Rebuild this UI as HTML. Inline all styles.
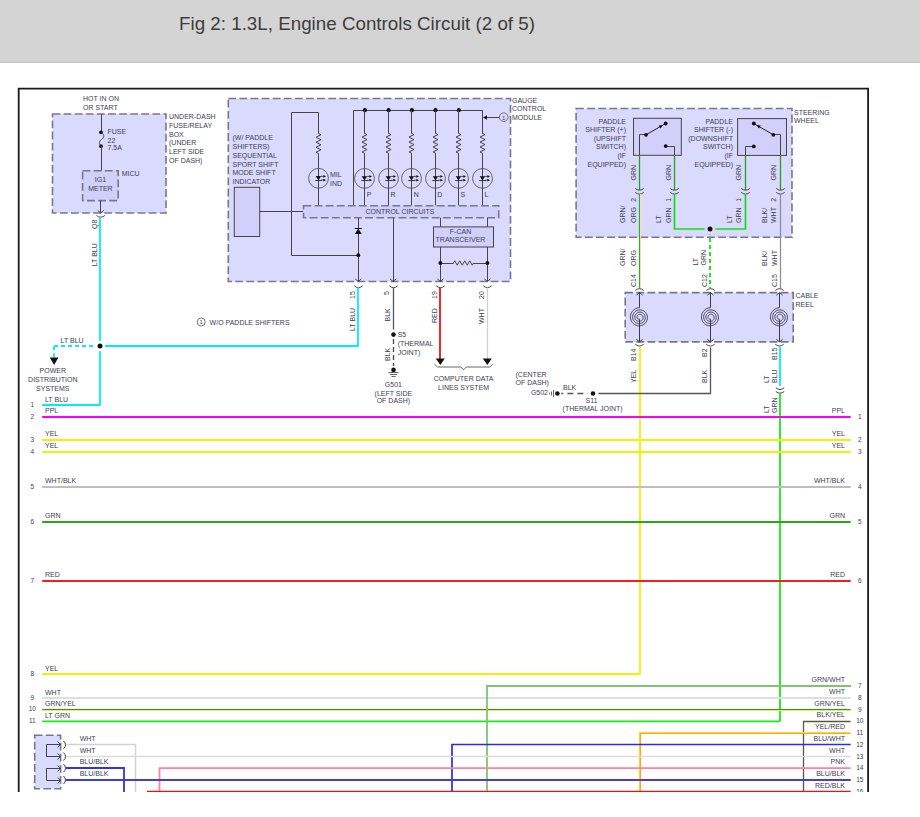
<!DOCTYPE html>
<html><head><meta charset="utf-8"><style>
html,body{margin:0;padding:0;background:#fff;width:920px;height:817px;overflow:hidden}
svg{display:block;font-family:"Liberation Sans",sans-serif}
</style></head><body>
<svg width="920" height="817" viewBox="0 0 920 817">
<rect x="0" y="0" width="920" height="63" fill="#d4d4d4"/>
<rect x="0" y="61" width="920" height="1" fill="#d0d0d0"/>
<rect x="0" y="62" width="920" height="1" fill="#c9c9c9"/>
<text x="179" y="30" font-size="19" fill="#3d3d3d" textLength="356" lengthAdjust="spacingAndGlyphs">Fig 2: 1.3L, Engine Controls Circuit (2 of 5)</text>
<path d="M18.7,792 V88.6 H868.1 V792" fill="none" stroke="#1a1a1a" stroke-width="1.8" />
<rect x="52.5" y="114" width="113.5" height="99" fill="#dadafe" stroke="#77778c" stroke-width="1.6" stroke-dasharray="7.8,3.3"/>
<text x="83" y="101.0" font-size="7" fill="#404052" text-anchor="start" >HOT IN ON</text>
<text x="83" y="109.5" font-size="7" fill="#404052" text-anchor="start" >OR START</text>
<text x="169" y="119.0" font-size="7" fill="#404052" text-anchor="start" >UNDER-DASH</text>
<text x="169" y="127.75" font-size="7" fill="#404052" text-anchor="start" >FUSE/RELAY</text>
<text x="169" y="136.5" font-size="7" fill="#404052" text-anchor="start" >BOX</text>
<text x="169" y="145.25" font-size="7" fill="#404052" text-anchor="start" >(UNDER</text>
<text x="169" y="154.0" font-size="7" fill="#404052" text-anchor="start" >LEFT SIDE</text>
<text x="169" y="162.75" font-size="7" fill="#404052" text-anchor="start" >OF DASH)</text>
<line x1="101.5" y1="114" x2="101.5" y2="132.3" stroke="#454545" stroke-width="1" />
<circle cx="101" cy="132.3" r="1.9" fill="#111"/>
<circle cx="101" cy="146.2" r="1.9" fill="#111"/>
<path d="M101.5,132.5 C105,135 104,138 101.5,139.5 C99,141 98.5,144 101.5,146.2" fill="none" stroke="#454545" stroke-width="1" />
<line x1="101.5" y1="146.2" x2="101.5" y2="170.7" stroke="#454545" stroke-width="1" />
<text x="107.5" y="133.9" font-size="7" fill="#404052" text-anchor="start" >FUSE</text>
<text x="107.5" y="142.8" font-size="7" fill="#404052" text-anchor="start" >22</text>
<text x="107.5" y="150.2" font-size="7" fill="#404052" text-anchor="start" >7.5A</text>
<rect x="82.6" y="170.7" width="35.60000000000001" height="29.900000000000006" fill="#d0d0fa" stroke="#77778c" stroke-width="1.6" stroke-dasharray="7.8,3.3"/>
<text x="100.4" y="182" font-size="7" fill="#404052" text-anchor="middle" >IG1</text>
<text x="100.4" y="191" font-size="7" fill="#404052" text-anchor="middle" >METER</text>
<text x="121.7" y="176" font-size="7" fill="#404052" text-anchor="start" >MICU</text>
<line x1="100.5" y1="200.6" x2="100.5" y2="213" stroke="#454545" stroke-width="1" />
<polyline points="97.60000000000001,210.365 100.7,213 103.8,210.365" fill="none" stroke="#454545" stroke-width="1" />
<path d="M96.5,215.5 Q100.7,218.89999999999998 104.9,215.5" fill="none" stroke="#454545" stroke-width="1" />
<line x1="100" y1="218" x2="100" y2="404.8" stroke="#00eefc" stroke-width="1.8" />
<text x="97" y="229" font-size="7" fill="#404052" text-anchor="start" transform="rotate(-90 97 229)" >Q8</text>
<text x="97" y="266.3" font-size="7" fill="#404052" text-anchor="start" transform="rotate(-90 97 266.3)" >LT BLU</text>
<line x1="54.1" y1="346" x2="98" y2="346" stroke="#00eefc" stroke-width="1.8" stroke-dasharray="4,3"/>
<line x1="54" y1="346.3" x2="54" y2="357.4" stroke="#00eefc" stroke-width="1.8" stroke-dasharray="4,3"/>
<path d="M49.8,357.6 L58.4,357.6 L54.1,365 Z" fill="#111"/>
<text x="60.6" y="342.8" font-size="7" fill="#404052" text-anchor="start" >LT BLU</text>
<text x="52.8" y="373.0" font-size="7" fill="#404052" text-anchor="middle" >POWER</text>
<text x="52.8" y="381.75" font-size="7" fill="#404052" text-anchor="middle" >DISTRIBUTION</text>
<text x="52.8" y="390.5" font-size="7" fill="#404052" text-anchor="middle" >SYSTEMS</text>
<line x1="100.4" y1="346" x2="358.3" y2="346" stroke="#00eefc" stroke-width="1.8" />
<circle cx="100" cy="346" r="5.2" fill="#fff"/>
<circle cx="100" cy="346" r="2.5" fill="#111"/>
<circle cx="201.2" cy="322" r="4" fill="none" stroke="#555" stroke-width="0.8"/>
<text x="201.2" y="324.4" font-size="6" fill="#404052" text-anchor="middle" >1</text>
<text x="209.6" y="324.8" font-size="7" fill="#404052" text-anchor="start" >W/O PADDLE SHIFTERS</text>
<rect x="228.3" y="98.5" width="282.2" height="183.0" fill="#dadafe" stroke="#77778c" stroke-width="1.6" stroke-dasharray="7.8,3.3"/>
<text x="232.5" y="139.8" font-size="7" fill="#404052" text-anchor="start" >(W/ PADDLE</text>
<text x="232.5" y="148.7" font-size="7" fill="#404052" text-anchor="start" >SHIFTERS)</text>
<text x="232.5" y="157.6" font-size="7" fill="#404052" text-anchor="start" >SEQUENTIAL</text>
<text x="232.5" y="166.5" font-size="7" fill="#404052" text-anchor="start" >SPORT SHIFT</text>
<text x="232.5" y="175.4" font-size="7" fill="#404052" text-anchor="start" >MODE SHIFT</text>
<text x="232.5" y="184.3" font-size="7" fill="#404052" text-anchor="start" >INDICATOR</text>
<text x="512" y="102.7" font-size="7" fill="#404052" text-anchor="start" >GAUGE</text>
<text x="512" y="111.2" font-size="7" fill="#404052" text-anchor="start" >CONTROL</text>
<text x="512" y="119.7" font-size="7" fill="#404052" text-anchor="start" >MODULE</text>
<rect x="234.3" y="187.3" width="25.399999999999977" height="49.19999999999999" fill="#d0d0fa" stroke="#454545" stroke-width="1"/>
<line x1="259.7" y1="211.5" x2="303.5" y2="211.5" stroke="#454545" stroke-width="1" />
<polyline points="358.5,255.5 291.5,255.5 291.5,112.5 318.5,112.5 318.5,133.5" fill="none" stroke="#454545" stroke-width="1" />
<polyline points="318.5,133.5 321.0,134.75 316.0,137.25 321.0,139.75 316.0,142.25 321.0,144.75 316.0,147.25 321.0,149.75 316.0,152.25 318.5,153.5" fill="none" stroke="#454545" stroke-width="1" />
<line x1="318.5" y1="153.5" x2="318.5" y2="205.6" stroke="#454545" stroke-width="1" />
<circle cx="318.5" cy="178.3" r="9.9" fill="none" stroke="#454545" stroke-width="0.8"/>
<path d="M315.7,176.10000000000002 L321.1,176.10000000000002 L318.5,180.5 Z" fill="#111"/>
<line x1="315.3" y1="180.5" x2="321.7" y2="180.5" stroke="#222" stroke-width="0.9" />
<line x1="321.0" y1="176.3" x2="324.5" y2="176.3" stroke="#222" stroke-width="0.8" />
<line x1="321.0" y1="180.10000000000002" x2="324.5" y2="180.10000000000002" stroke="#222" stroke-width="0.8" />
<path d="M326.0,176.3 l-2.6,-1.4 v2.8 Z M326.0,180.10000000000002 l-2.6,-1.4 v2.8 Z" fill="#111"/>
<text x="330" y="176.7" font-size="7" fill="#404052" text-anchor="start" >MIL</text>
<text x="330" y="185.7" font-size="7" fill="#404052" text-anchor="start" >IND</text>
<polyline points="353.5,205.5 353.5,110.5 482.5,110.5 482.5,133.5" fill="none" stroke="#454545" stroke-width="1" />
<circle cx="364.9" cy="110.2" r="2.1" fill="#111"/>
<line x1="364.5" y1="110.2" x2="364.5" y2="133.4" stroke="#454545" stroke-width="1" />
<polyline points="364.5,133.4 367.0,134.64 362.0,137.11 367.0,139.59 362.0,142.06 367.0,144.54 362.0,147.01 367.0,149.49 362.0,151.96 364.5,153.2" fill="none" stroke="#454545" stroke-width="1" />
<line x1="364.5" y1="153.2" x2="364.5" y2="205.6" stroke="#454545" stroke-width="1" />
<circle cx="364.5" cy="178.4" r="9.9" fill="none" stroke="#454545" stroke-width="0.8"/>
<path d="M361.7,176.20000000000002 L367.1,176.20000000000002 L364.5,180.6 Z" fill="#111"/>
<line x1="361.3" y1="180.6" x2="367.7" y2="180.6" stroke="#222" stroke-width="0.9" />
<line x1="367.0" y1="176.4" x2="370.5" y2="176.4" stroke="#222" stroke-width="0.8" />
<line x1="367.0" y1="180.20000000000002" x2="370.5" y2="180.20000000000002" stroke="#222" stroke-width="0.8" />
<path d="M372.0,176.4 l-2.6,-1.4 v2.8 Z M372.0,180.20000000000002 l-2.6,-1.4 v2.8 Z" fill="#111"/>
<text x="366.7" y="196.5" font-size="7" fill="#404052" text-anchor="start" >P</text>
<circle cx="388.6" cy="110.2" r="2.1" fill="#111"/>
<line x1="388.5" y1="110.2" x2="388.5" y2="133.4" stroke="#454545" stroke-width="1" />
<polyline points="388.5,133.4 391.0,134.64 386.0,137.11 391.0,139.59 386.0,142.06 391.0,144.54 386.0,147.01 391.0,149.49 386.0,151.96 388.5,153.2" fill="none" stroke="#454545" stroke-width="1" />
<line x1="388.5" y1="153.2" x2="388.5" y2="205.6" stroke="#454545" stroke-width="1" />
<circle cx="388.5" cy="178.4" r="9.9" fill="none" stroke="#454545" stroke-width="0.8"/>
<path d="M385.7,176.20000000000002 L391.1,176.20000000000002 L388.5,180.6 Z" fill="#111"/>
<line x1="385.3" y1="180.6" x2="391.7" y2="180.6" stroke="#222" stroke-width="0.9" />
<line x1="391.0" y1="176.4" x2="394.5" y2="176.4" stroke="#222" stroke-width="0.8" />
<line x1="391.0" y1="180.20000000000002" x2="394.5" y2="180.20000000000002" stroke="#222" stroke-width="0.8" />
<path d="M396.0,176.4 l-2.6,-1.4 v2.8 Z M396.0,180.20000000000002 l-2.6,-1.4 v2.8 Z" fill="#111"/>
<text x="390.40000000000003" y="196.5" font-size="7" fill="#404052" text-anchor="start" >R</text>
<circle cx="411.9" cy="110.2" r="2.1" fill="#111"/>
<line x1="411.5" y1="110.2" x2="411.5" y2="133.4" stroke="#454545" stroke-width="1" />
<polyline points="411.5,133.4 414.0,134.64 409.0,137.11 414.0,139.59 409.0,142.06 414.0,144.54 409.0,147.01 414.0,149.49 409.0,151.96 411.5,153.2" fill="none" stroke="#454545" stroke-width="1" />
<line x1="411.5" y1="153.2" x2="411.5" y2="205.6" stroke="#454545" stroke-width="1" />
<circle cx="411.5" cy="178.4" r="9.9" fill="none" stroke="#454545" stroke-width="0.8"/>
<path d="M408.7,176.20000000000002 L414.1,176.20000000000002 L411.5,180.6 Z" fill="#111"/>
<line x1="408.3" y1="180.6" x2="414.7" y2="180.6" stroke="#222" stroke-width="0.9" />
<line x1="414.0" y1="176.4" x2="417.5" y2="176.4" stroke="#222" stroke-width="0.8" />
<line x1="414.0" y1="180.20000000000002" x2="417.5" y2="180.20000000000002" stroke="#222" stroke-width="0.8" />
<path d="M419.0,176.4 l-2.6,-1.4 v2.8 Z M419.0,180.20000000000002 l-2.6,-1.4 v2.8 Z" fill="#111"/>
<text x="413.7" y="196.5" font-size="7" fill="#404052" text-anchor="start" >N</text>
<circle cx="435.5" cy="110.2" r="2.1" fill="#111"/>
<line x1="435.5" y1="110.2" x2="435.5" y2="133.4" stroke="#454545" stroke-width="1" />
<polyline points="435.5,133.4 438.0,134.64 433.0,137.11 438.0,139.59 433.0,142.06 438.0,144.54 433.0,147.01 438.0,149.49 433.0,151.96 435.5,153.2" fill="none" stroke="#454545" stroke-width="1" />
<line x1="435.5" y1="153.2" x2="435.5" y2="205.6" stroke="#454545" stroke-width="1" />
<circle cx="435.5" cy="178.4" r="9.9" fill="none" stroke="#454545" stroke-width="0.8"/>
<path d="M432.7,176.20000000000002 L438.1,176.20000000000002 L435.5,180.6 Z" fill="#111"/>
<line x1="432.3" y1="180.6" x2="438.7" y2="180.6" stroke="#222" stroke-width="0.9" />
<line x1="438.0" y1="176.4" x2="441.5" y2="176.4" stroke="#222" stroke-width="0.8" />
<line x1="438.0" y1="180.20000000000002" x2="441.5" y2="180.20000000000002" stroke="#222" stroke-width="0.8" />
<path d="M443.0,176.4 l-2.6,-1.4 v2.8 Z M443.0,180.20000000000002 l-2.6,-1.4 v2.8 Z" fill="#111"/>
<text x="437.3" y="196.5" font-size="7" fill="#404052" text-anchor="start" >D</text>
<circle cx="458.8" cy="110.2" r="2.1" fill="#111"/>
<line x1="458.5" y1="110.2" x2="458.5" y2="133.4" stroke="#454545" stroke-width="1" />
<polyline points="458.5,133.4 461.0,134.64 456.0,137.11 461.0,139.59 456.0,142.06 461.0,144.54 456.0,147.01 461.0,149.49 456.0,151.96 458.5,153.2" fill="none" stroke="#454545" stroke-width="1" />
<line x1="458.5" y1="153.2" x2="458.5" y2="205.6" stroke="#454545" stroke-width="1" />
<circle cx="458.5" cy="178.4" r="9.9" fill="none" stroke="#454545" stroke-width="0.8"/>
<path d="M455.7,176.20000000000002 L461.1,176.20000000000002 L458.5,180.6 Z" fill="#111"/>
<line x1="455.3" y1="180.6" x2="461.7" y2="180.6" stroke="#222" stroke-width="0.9" />
<line x1="461.0" y1="176.4" x2="464.5" y2="176.4" stroke="#222" stroke-width="0.8" />
<line x1="461.0" y1="180.20000000000002" x2="464.5" y2="180.20000000000002" stroke="#222" stroke-width="0.8" />
<path d="M466.0,176.4 l-2.6,-1.4 v2.8 Z M466.0,180.20000000000002 l-2.6,-1.4 v2.8 Z" fill="#111"/>
<text x="460.6" y="196.5" font-size="7" fill="#404052" text-anchor="start" >S</text>
<line x1="482.5" y1="110.2" x2="482.5" y2="133.4" stroke="#454545" stroke-width="1" />
<polyline points="482.5,133.4 485.0,134.64 480.0,137.11 485.0,139.59 480.0,142.06 485.0,144.54 480.0,147.01 485.0,149.49 480.0,151.96 482.5,153.2" fill="none" stroke="#454545" stroke-width="1" />
<line x1="482.5" y1="153.2" x2="482.5" y2="205.6" stroke="#454545" stroke-width="1" />
<circle cx="482.5" cy="178.4" r="9.9" fill="none" stroke="#454545" stroke-width="0.8"/>
<path d="M479.7,176.20000000000002 L485.1,176.20000000000002 L482.5,180.6 Z" fill="#111"/>
<line x1="479.3" y1="180.6" x2="485.7" y2="180.6" stroke="#222" stroke-width="0.9" />
<line x1="485.0" y1="176.4" x2="488.5" y2="176.4" stroke="#222" stroke-width="0.8" />
<line x1="485.0" y1="180.20000000000002" x2="488.5" y2="180.20000000000002" stroke="#222" stroke-width="0.8" />
<path d="M490.0,176.4 l-2.6,-1.4 v2.8 Z M490.0,180.20000000000002 l-2.6,-1.4 v2.8 Z" fill="#111"/>
<text x="484.40000000000003" y="196.5" font-size="7" fill="#404052" text-anchor="start" >L</text>
<line x1="484" y1="117.5" x2="499.4" y2="117.5" stroke="#454545" stroke-width="1" />
<path d="M483,117.5 l4,-2.2 v4.4 Z" fill="#111"/>
<circle cx="503.7" cy="117.2" r="4.3" fill="none" stroke="#555" stroke-width="0.8"/>
<text x="503.7" y="119.6" font-size="6" fill="#404052" text-anchor="middle" >1</text>
<rect x="303.5" y="205.7" width="195.2" height="12.100000000000023" fill="#d0d0fa" stroke="#77778c" stroke-width="1.6" stroke-dasharray="7.8,3.3"/>
<text x="400" y="213.8" font-size="7" fill="#404052" text-anchor="middle" >CONTROL CIRCUITS</text>
<line x1="358.5" y1="217.8" x2="358.5" y2="281.5" stroke="#454545" stroke-width="1" />
<path d="M354.8,234 L361.8,234 L358.3,228.5 Z" fill="#111"/>
<line x1="354.8" y1="228.5" x2="361.8" y2="228.5" stroke="#111" stroke-width="1" />
<circle cx="358.3" cy="255.3" r="2" fill="#111"/>
<polyline points="355.2,278.865 358.3,281.5 361.40000000000003,278.865" fill="none" stroke="#454545" stroke-width="1" />
<line x1="393.5" y1="217.8" x2="393.5" y2="281.5" stroke="#454545" stroke-width="1" />
<polyline points="390.0,278.865 393.1,281.5 396.20000000000005,278.865" fill="none" stroke="#454545" stroke-width="1" />
<line x1="440.5" y1="217.8" x2="440.5" y2="226.9" stroke="#454545" stroke-width="1" />
<line x1="487.5" y1="217.8" x2="487.5" y2="226.9" stroke="#454545" stroke-width="1" />
<rect x="433.5" y="226.9" width="60.0" height="20.099999999999994" fill="#d0d0fa" stroke="#454545" stroke-width="1"/>
<text x="460.5" y="233.8" font-size="7" fill="#404052" text-anchor="middle" >F-CAN</text>
<text x="460.5" y="242" font-size="7" fill="#404052" text-anchor="middle" >TRANSCEIVER</text>
<line x1="440.5" y1="247" x2="440.5" y2="281.5" stroke="#454545" stroke-width="1" />
<line x1="487.5" y1="247" x2="487.5" y2="281.5" stroke="#454545" stroke-width="1" />
<line x1="440.4" y1="263.5" x2="453.5" y2="263.5" stroke="#454545" stroke-width="1" />
<line x1="473.5" y1="263.5" x2="487.4" y2="263.5" stroke="#454545" stroke-width="1" />
<polyline points="453.5,263 454.75,260.8 457.25,265.2 459.75,260.8 462.25,265.2 464.75,260.8 467.25,265.2 469.75,260.8 472.25,265.2 473.5,263" fill="none" stroke="#454545" stroke-width="1" />
<circle cx="440.4" cy="263" r="2" fill="#111"/>
<circle cx="487.4" cy="263" r="2" fill="#111"/>
<polyline points="437.29999999999995,278.865 440.4,281.5 443.5,278.865" fill="none" stroke="#454545" stroke-width="1" />
<polyline points="484.29999999999995,278.865 487.4,281.5 490.5,278.865" fill="none" stroke="#454545" stroke-width="1" />
<path d="M354.3,285.90000000000003 Q358.5,289.3 362.7,285.90000000000003" fill="none" stroke="#454545" stroke-width="1" />
<path d="M389.3,285.90000000000003 Q393.5,289.3 397.7,285.90000000000003" fill="none" stroke="#454545" stroke-width="1" />
<path d="M436.3,285.90000000000003 Q440.5,289.3 444.7,285.90000000000003" fill="none" stroke="#454545" stroke-width="1" />
<path d="M483.3,285.90000000000003 Q487.5,289.3 491.7,285.90000000000003" fill="none" stroke="#454545" stroke-width="1" />
<text x="355" y="299" font-size="7" fill="#404052" text-anchor="start" transform="rotate(-90 355 299)" >15</text>
<text x="355" y="331" font-size="7" fill="#404052" text-anchor="start" transform="rotate(-90 355 331)" >LT BLU</text>
<text x="389" y="295" font-size="7" fill="#404052" text-anchor="start" transform="rotate(-90 389 295)" >5</text>
<text x="390" y="321.5" font-size="7" fill="#404052" text-anchor="start" transform="rotate(-90 390 321.5)" >BLK</text>
<text x="437" y="299" font-size="7" fill="#404052" text-anchor="start" transform="rotate(-90 437 299)" >19</text>
<text x="437" y="323" font-size="7" fill="#404052" text-anchor="start" transform="rotate(-90 437 323)" >RED</text>
<text x="484" y="299" font-size="7" fill="#404052" text-anchor="start" transform="rotate(-90 484 299)" >20</text>
<text x="484" y="324" font-size="7" fill="#404052" text-anchor="start" transform="rotate(-90 484 324)" >WHT</text>
<line x1="358" y1="287.6" x2="358" y2="346.3" stroke="#00eefc" stroke-width="1.8" />
<line x1="393.5" y1="287.6" x2="393.5" y2="334.6" stroke="#555" stroke-width="1.3" />
<circle cx="393.5" cy="334.6" r="5" fill="#fff"/>
<circle cx="393.5" cy="334.6" r="2.3" fill="#111"/>
<line x1="393.5" y1="339" x2="393.5" y2="367" stroke="#444" stroke-width="1.3" stroke-dasharray="5,3"/>
<circle cx="393.5" cy="369.9" r="4" fill="#fff"/>
<circle cx="393.5" cy="369.9" r="2.3" fill="#111"/>
<line x1="388.5" y1="372.5" x2="398.5" y2="372.5" stroke="#555" stroke-width="0.9" />
<line x1="390" y1="374.5" x2="397" y2="374.5" stroke="#555" stroke-width="0.9" />
<line x1="391.5" y1="376.5" x2="395.5" y2="376.5" stroke="#555" stroke-width="0.9" />
<text x="390" y="361" font-size="7" fill="#404052" text-anchor="start" transform="rotate(-90 390 361)" >BLK</text>
<text x="397.7" y="336.8" font-size="7" fill="#404052" text-anchor="start" >S5</text>
<text x="397.7" y="345.6" font-size="7" fill="#404052" text-anchor="start" >(THERMAL</text>
<text x="397.7" y="354.5" font-size="7" fill="#404052" text-anchor="start" >JOINT)</text>
<text x="393.4" y="386.7" font-size="7" fill="#404052" text-anchor="middle" >G501</text>
<text x="393.4" y="395.6" font-size="7" fill="#404052" text-anchor="middle" >(LEFT SIDE</text>
<text x="393.4" y="403.4" font-size="7" fill="#404052" text-anchor="middle" >OF DASH)</text>
<line x1="440" y1="287.6" x2="440" y2="359" stroke="#ee1010" stroke-width="1.8" />
<path d="M435.8,358.5 L444.8,358.5 L440.3,365 Z" fill="#111"/>
<line x1="487.5" y1="287.6" x2="487.5" y2="359" stroke="#cfcfcf" stroke-width="1.3" />
<path d="M482.8,358.5 L491.8,358.5 L487.3,365 Z" fill="#111"/>
<path d="M434.5,364.2 L437.5,367 L460.8,367 L463.6,369.8 L466.4,367 L489.8,367 L492.8,364.2" fill="none" stroke="#666" stroke-width="1" />
<text x="463.6" y="380.6" font-size="7" fill="#404052" text-anchor="middle" >COMPUTER DATA</text>
<text x="463.6" y="389.5" font-size="7" fill="#404052" text-anchor="middle" >LINES SYSTEM</text>
<rect x="576.1" y="108.5" width="215.89999999999998" height="128.7" fill="#dadafe" stroke="#77778c" stroke-width="1.6" stroke-dasharray="7.8,3.3"/>
<text x="794" y="114.8" font-size="7" fill="#404052" text-anchor="start" >STEERING</text>
<text x="794" y="122.6" font-size="7" fill="#404052" text-anchor="start" >WHEEL</text>
<rect x="633.5" y="118.3" width="47.799999999999955" height="37.000000000000014" fill="#d0d0fa" stroke="#454545" stroke-width="1"/>
<rect x="737.6" y="118.6" width="48.89999999999998" height="36.80000000000001" fill="#d0d0fa" stroke="#454545" stroke-width="1"/>
<text x="626" y="123.6" font-size="7" fill="#404052" text-anchor="end" >PADDLE</text>
<text x="626" y="132.2" font-size="7" fill="#404052" text-anchor="end" >SHIFTER (+)</text>
<text x="626" y="140.8" font-size="7" fill="#404052" text-anchor="end" >(UPSHIFT</text>
<text x="626" y="149.4" font-size="7" fill="#404052" text-anchor="end" >SWITCH)</text>
<text x="626" y="158.0" font-size="7" fill="#404052" text-anchor="end" >(IF</text>
<text x="626" y="166.6" font-size="7" fill="#404052" text-anchor="end" >EQUIPPED)</text>
<text x="733" y="123.6" font-size="7" fill="#404052" text-anchor="end" >PADDLE</text>
<text x="733" y="132.2" font-size="7" fill="#404052" text-anchor="end" >SHIFTER (-)</text>
<text x="733" y="140.8" font-size="7" fill="#404052" text-anchor="end" >(DOWNSHIFT</text>
<text x="733" y="149.4" font-size="7" fill="#404052" text-anchor="end" >SWITCH)</text>
<text x="733" y="158.0" font-size="7" fill="#404052" text-anchor="end" >(IF</text>
<text x="733" y="166.6" font-size="7" fill="#404052" text-anchor="end" >EQUIPPED)</text>
<polyline points="639.5,155.5 639.5,134.5 646.5,134.5" fill="none" stroke="#454545" stroke-width="1" />
<line x1="646" y1="134.8" x2="665.7" y2="123.5" stroke="#222" stroke-width="1" />
<circle cx="646" cy="134.8" r="1.9" fill="#111"/>
<circle cx="665.7" cy="123.5" r="1.9" fill="#111"/>
<polyline points="665.5,146.5 674.5,146.5 674.5,155.5" fill="none" stroke="#454545" stroke-width="1" />
<circle cx="665.7" cy="146.1" r="1.9" fill="#111"/>
<polyline points="780.5,155.5 780.5,134.5 773.5,134.5" fill="none" stroke="#454545" stroke-width="1" />
<line x1="753.8" y1="123.5" x2="773.4" y2="134.8" stroke="#222" stroke-width="1" />
<circle cx="753.8" cy="123.5" r="1.9" fill="#111"/>
<circle cx="773.4" cy="134.8" r="1.9" fill="#111"/>
<polyline points="753.5,146.5 745.5,146.5 745.5,155.5" fill="none" stroke="#454545" stroke-width="1" />
<circle cx="753.8" cy="146.4" r="1.9" fill="#111"/>
<path d="M663.10,124.90 L660.49,128.38 L658.79,125.43 Z" fill="#111"/>
<path d="M756.40,125.00 L760.71,125.52 L759.02,128.47 Z" fill="#111"/>
<line x1="639.5" y1="155.3" x2="639.5" y2="190" stroke="#2aa018" stroke-width="1.3" />
<line x1="674.5" y1="155.3" x2="674.5" y2="190" stroke="#2aa018" stroke-width="1.3" />
<line x1="745.5" y1="155.4" x2="745.5" y2="190" stroke="#2aa018" stroke-width="1.3" />
<line x1="780.5" y1="155.4" x2="780.5" y2="190" stroke="#2aa018" stroke-width="1.3" />
<path d="M635.3,188.5 Q639.5,191.89999999999998 643.7,188.5" fill="none" stroke="#454545" stroke-width="1" />
<path d="M635.3,192.4 Q639.5,195.79999999999998 643.7,192.4" fill="none" stroke="#454545" stroke-width="1" />
<path d="M670.3,188.5 Q674.5,191.89999999999998 678.7,188.5" fill="none" stroke="#454545" stroke-width="1" />
<path d="M670.3,192.4 Q674.5,195.79999999999998 678.7,192.4" fill="none" stroke="#454545" stroke-width="1" />
<path d="M741.3,188.5 Q745.5,191.89999999999998 749.7,188.5" fill="none" stroke="#454545" stroke-width="1" />
<path d="M741.3,192.4 Q745.5,195.79999999999998 749.7,192.4" fill="none" stroke="#454545" stroke-width="1" />
<path d="M776.3,188.5 Q780.5,191.89999999999998 784.7,188.5" fill="none" stroke="#454545" stroke-width="1" />
<path d="M776.3,192.4 Q780.5,195.79999999999998 784.7,192.4" fill="none" stroke="#454545" stroke-width="1" />
<line x1="639.5" y1="194" x2="639.5" y2="288.5" stroke="#30b020" stroke-width="1.2" />
<line x1="640.5" y1="194" x2="640.5" y2="288.5" stroke="#ffd6b8" stroke-width="1.0" />
<polyline points="674.5,194 674.5,229 745.5,229 745.5,194" fill="none" stroke="#10e010" stroke-width="1.7" />
<line x1="710" y1="231" x2="710" y2="288" stroke="#10e010" stroke-width="1.8" stroke-dasharray="4,3"/>
<circle cx="710" cy="229" r="5.5" fill="#dadafe"/>
<circle cx="710" cy="229" r="2.5" fill="#111"/>
<line x1="780.5" y1="194" x2="780.5" y2="288.5" stroke="#8a8a8a" stroke-width="1.2" />
<text x="636" y="180.5" font-size="7" fill="#404052" text-anchor="start" transform="rotate(-90 636 180.5)" >GRN</text>
<text x="671" y="180.5" font-size="7" fill="#404052" text-anchor="start" transform="rotate(-90 671 180.5)" >GRN</text>
<text x="741" y="180.5" font-size="7" fill="#404052" text-anchor="start" transform="rotate(-90 741 180.5)" >GRN</text>
<text x="775.8" y="180.5" font-size="7" fill="#404052" text-anchor="start" transform="rotate(-90 775.8 180.5)" >GRN</text>
<text x="636" y="201.7" font-size="7" fill="#404052" text-anchor="start" transform="rotate(-90 636 201.7)" >2</text>
<text x="671" y="201.7" font-size="7" fill="#404052" text-anchor="start" transform="rotate(-90 671 201.7)" >1</text>
<text x="741" y="201.7" font-size="7" fill="#404052" text-anchor="start" transform="rotate(-90 741 201.7)" >1</text>
<text x="775.8" y="201.7" font-size="7" fill="#404052" text-anchor="start" transform="rotate(-90 775.8 201.7)" >2</text>
<text x="624.5" y="223" font-size="7" fill="#404052" text-anchor="start" transform="rotate(-90 624.5 223)" >GRN/</text>
<text x="636" y="223" font-size="7" fill="#404052" text-anchor="start" transform="rotate(-90 636 223)" >ORG</text>
<text x="661" y="223" font-size="7" fill="#404052" text-anchor="start" transform="rotate(-90 661 223)" >LT</text>
<text x="671" y="223" font-size="7" fill="#404052" text-anchor="start" transform="rotate(-90 671 223)" >GRN</text>
<text x="731.5" y="223" font-size="7" fill="#404052" text-anchor="start" transform="rotate(-90 731.5 223)" >LT</text>
<text x="741" y="223" font-size="7" fill="#404052" text-anchor="start" transform="rotate(-90 741 223)" >GRN</text>
<text x="767" y="223" font-size="7" fill="#404052" text-anchor="start" transform="rotate(-90 767 223)" >BLK/</text>
<text x="776" y="223" font-size="7" fill="#404052" text-anchor="start" transform="rotate(-90 776 223)" >WHT</text>
<text x="624.5" y="266" font-size="7" fill="#404052" text-anchor="start" transform="rotate(-90 624.5 266)" >GRN/</text>
<text x="636" y="266" font-size="7" fill="#404052" text-anchor="start" transform="rotate(-90 636 266)" >ORG</text>
<text x="698" y="265.5" font-size="7" fill="#404052" text-anchor="start" transform="rotate(-90 698 265.5)" >LT</text>
<text x="705.7" y="265.5" font-size="7" fill="#404052" text-anchor="start" transform="rotate(-90 705.7 265.5)" >GRN</text>
<text x="767" y="266" font-size="7" fill="#404052" text-anchor="start" transform="rotate(-90 767 266)" >BLK/</text>
<text x="776.6" y="266" font-size="7" fill="#404052" text-anchor="start" transform="rotate(-90 776.6 266)" >WHT</text>
<text x="636" y="287" font-size="7" fill="#404052" text-anchor="start" transform="rotate(-90 636 287)" >C14</text>
<text x="706.5" y="287" font-size="7" fill="#404052" text-anchor="start" transform="rotate(-90 706.5 287)" >C12</text>
<text x="776.6" y="287" font-size="7" fill="#404052" text-anchor="start" transform="rotate(-90 776.6 287)" >C15</text>
<rect x="625.2" y="292.6" width="168.0" height="49.299999999999955" fill="#dadafe" stroke="#77778c" stroke-width="1.6" stroke-dasharray="7.8,3.3"/>
<text x="795.5" y="298.3" font-size="7" fill="#404052" text-anchor="start" >CABLE</text>
<text x="795.5" y="306.6" font-size="7" fill="#404052" text-anchor="start" >REEL</text>
<path d="M635.3,290.4 Q639.5,287.0 643.7,290.4" fill="none" stroke="#454545" stroke-width="1" />
<polyline points="636.4,295.235 639.5,292.6 642.6,295.235" fill="none" stroke="#454545" stroke-width="1" />
<line x1="639.5" y1="292.6" x2="639.5" y2="307.7" stroke="#3a3a4a" stroke-width="1" />
<polyline points="639.5,307.7 638.62,307.77 637.76,307.92 636.92,308.15 636.11,308.46 635.32,308.83 634.58,309.28 633.89,309.79 633.25,310.36 632.66,310.98 632.14,311.65 631.68,312.37 631.29,313.12 630.97,313.9 630.73,314.7 630.56,315.52 630.46,316.35 630.45,317.18 630.51,318.01 630.64,318.82 630.85,319.62 631.13,320.39 631.47,321.13 631.88,321.83 632.36,322.49 632.89,323.1 633.47,323.66 634.09,324.16 634.76,324.6 635.46,324.97 636.19,325.28 636.95,325.52 637.72,325.69 638.5,325.78 639.28,325.81 640.05,325.76 640.82,325.64 641.57,325.45 642.3,325.2 643.0,324.88 643.66,324.5 644.28,324.07 644.86,323.58 645.39,323.04 645.86,322.45 646.28,321.83 646.64,321.18 646.93,320.49 647.17,319.79 647.33,319.07 647.43,318.34 647.46,317.61 647.42,316.88 647.32,316.17 647.15,315.46 646.92,314.78 646.63,314.13 646.28,313.5 645.88,312.92 645.43,312.37 644.93,311.87 644.39,311.42 643.81,311.03 643.2,310.69 642.57,310.41 641.92,310.18 641.25,310.02 640.57,309.93 639.89,309.89 639.21,309.92 638.54,310.01 637.88,310.16 637.25,310.37 636.63,310.63 636.05,310.95 635.5,311.32 634.99,311.73 634.53,312.19 634.1,312.69 633.73,313.22 633.41,313.78 633.14,314.37 632.93,314.97 632.78,315.59 632.68,316.22 632.64,316.85 632.66,317.48 632.74,318.1 632.87,318.71 633.06,319.3 633.3,319.87 633.59,320.41 633.92,320.92 634.3,321.4 634.72,321.83 635.18,322.23 635.67,322.57 636.18,322.88 636.72,323.13 637.28,323.33 637.85,323.47 638.42,323.57 639.0,323.61 639.58,323.59 640.15,323.53 640.72,323.41 641.26,323.24 641.79,323.03 642.29,322.77 642.76,322.46 643.2,322.12 643.6,321.73 643.96,321.32 644.29,320.87 644.57,320.4 644.8,319.91 644.99,319.41 645.13,318.89 645.22,318.36 645.26,317.83 645.25,317.3 645.19,316.78 645.09,316.26 644.94,315.77 644.75,315.29 644.51,314.83 644.24,314.4 643.93,313.99 643.58,313.62 643.21,313.29 642.81,312.99 642.38,312.74 641.94,312.52 641.48,312.35 641.01,312.22 640.53,312.13 640.05,312.09 639.57,312.1 639.09,312.14 638.63,312.23 638.18,312.37 637.74,312.54 637.33,312.75 636.94,312.99 636.57,313.27 636.24,313.58 635.93,313.92 635.66,314.28 635.43,314.66 635.23,315.06 635.08,315.47 634.96,315.89 634.88,316.32 634.84,316.75 634.84,317.18 634.88,317.6 634.96,318.02 635.08,318.42 635.23,318.81 635.41,319.18 635.63,319.53 635.88,319.86 636.15,320.16 636.45,320.43 636.77,320.67 637.11,320.88 637.46,321.06 637.83,321.2 638.2,321.3 638.58,321.37 638.96,321.41 639.34,321.41 639.71,321.38 640.08,321.31 640.44,321.21 640.78,321.07 641.11,320.91 641.42,320.72 641.7,320.51 641.97,320.27 642.2,320.0 642.42,319.73 642.6,319.43 642.75,319.12 642.88,318.8 642.97,318.48 643.03,318.15 643.06,317.82 643.06,317.49 643.03,317.16 642.97,316.84 642.89,316.53 642.77,316.24 642.63,315.95 642.47,315.69 642.28,315.44 642.07,315.22 641.85,315.01 641.61,314.83 641.36,314.67 641.09,314.54 640.82,314.44 640.54,314.36 640.26,314.31 639.98,314.28 639.7,314.28 639.42,314.31 639.15,314.36 638.89,314.44 638.64,314.54 638.4,314.66 638.18,314.8 637.98,314.95 637.79,315.13 637.62,315.32 637.47,315.52 637.34,315.73 637.23,315.95 637.15,316.18 637.09,316.41 637.04,316.64 637.03,316.88 637.03,317.11 637.05,317.33 637.1,317.55 637.16,317.76 637.25,317.97 637.35,318.16 637.46,318.34 637.59,318.5 637.74,318.65 637.89,318.79 638.06,318.9 638.23,319.0 638.41,319.08 638.59,319.15 638.77,319.19 638.96,319.22 639.14,319.23 639.32,319.22 639.5,319.2" fill="none" stroke="#3a3a4a" stroke-width="1"/>
<line x1="639.5" y1="319.2" x2="639.5" y2="341.9" stroke="#3a3a4a" stroke-width="1" />
<polyline points="636.4,339.265 639.5,341.9 642.6,339.265" fill="none" stroke="#3a3a4a" stroke-width="1" />
<path d="M635.3,344.3 Q639.5,347.7 643.7,344.3" fill="none" stroke="#454545" stroke-width="1" />
<path d="M706.3,290.4 Q710.5,287.0 714.7,290.4" fill="none" stroke="#454545" stroke-width="1" />
<polyline points="707.4,295.235 710.5,292.6 713.6,295.235" fill="none" stroke="#454545" stroke-width="1" />
<line x1="710.5" y1="292.6" x2="710.5" y2="307.7" stroke="#3a3a4a" stroke-width="1" />
<polyline points="710.5,307.7 709.62,307.77 708.76,307.92 707.92,308.15 707.11,308.46 706.32,308.83 705.58,309.28 704.89,309.79 704.25,310.36 703.66,310.98 703.14,311.65 702.68,312.37 702.29,313.12 701.97,313.9 701.73,314.7 701.56,315.52 701.46,316.35 701.45,317.18 701.51,318.01 701.64,318.82 701.85,319.62 702.13,320.39 702.47,321.13 702.88,321.83 703.36,322.49 703.89,323.1 704.47,323.66 705.09,324.16 705.76,324.6 706.46,324.97 707.19,325.28 707.95,325.52 708.72,325.69 709.5,325.78 710.28,325.81 711.05,325.76 711.82,325.64 712.57,325.45 713.3,325.2 714.0,324.88 714.66,324.5 715.28,324.07 715.86,323.58 716.39,323.04 716.86,322.45 717.28,321.83 717.64,321.18 717.93,320.49 718.17,319.79 718.33,319.07 718.43,318.34 718.46,317.61 718.42,316.88 718.32,316.17 718.15,315.46 717.92,314.78 717.63,314.13 717.28,313.5 716.88,312.92 716.43,312.37 715.93,311.87 715.39,311.42 714.81,311.03 714.2,310.69 713.57,310.41 712.92,310.18 712.25,310.02 711.57,309.93 710.89,309.89 710.21,309.92 709.54,310.01 708.88,310.16 708.25,310.37 707.63,310.63 707.05,310.95 706.5,311.32 705.99,311.73 705.53,312.19 705.1,312.69 704.73,313.22 704.41,313.78 704.14,314.37 703.93,314.97 703.78,315.59 703.68,316.22 703.64,316.85 703.66,317.48 703.74,318.1 703.87,318.71 704.06,319.3 704.3,319.87 704.59,320.41 704.92,320.92 705.3,321.4 705.72,321.83 706.18,322.23 706.67,322.57 707.18,322.88 707.72,323.13 708.28,323.33 708.85,323.47 709.42,323.57 710.0,323.61 710.58,323.59 711.15,323.53 711.72,323.41 712.26,323.24 712.79,323.03 713.29,322.77 713.76,322.46 714.2,322.12 714.6,321.73 714.96,321.32 715.29,320.87 715.57,320.4 715.8,319.91 715.99,319.41 716.13,318.89 716.22,318.36 716.26,317.83 716.25,317.3 716.19,316.78 716.09,316.26 715.94,315.77 715.75,315.29 715.51,314.83 715.24,314.4 714.93,313.99 714.58,313.62 714.21,313.29 713.81,312.99 713.38,312.74 712.94,312.52 712.48,312.35 712.01,312.22 711.53,312.13 711.05,312.09 710.57,312.1 710.09,312.14 709.63,312.23 709.18,312.37 708.74,312.54 708.33,312.75 707.94,312.99 707.57,313.27 707.24,313.58 706.93,313.92 706.66,314.28 706.43,314.66 706.23,315.06 706.08,315.47 705.96,315.89 705.88,316.32 705.84,316.75 705.84,317.18 705.88,317.6 705.96,318.02 706.08,318.42 706.23,318.81 706.41,319.18 706.63,319.53 706.88,319.86 707.15,320.16 707.45,320.43 707.77,320.67 708.11,320.88 708.46,321.06 708.83,321.2 709.2,321.3 709.58,321.37 709.96,321.41 710.34,321.41 710.71,321.38 711.08,321.31 711.44,321.21 711.78,321.07 712.11,320.91 712.42,320.72 712.7,320.51 712.97,320.27 713.2,320.0 713.42,319.73 713.6,319.43 713.75,319.12 713.88,318.8 713.97,318.48 714.03,318.15 714.06,317.82 714.06,317.49 714.03,317.16 713.97,316.84 713.89,316.53 713.77,316.24 713.63,315.95 713.47,315.69 713.28,315.44 713.07,315.22 712.85,315.01 712.61,314.83 712.36,314.67 712.09,314.54 711.82,314.44 711.54,314.36 711.26,314.31 710.98,314.28 710.7,314.28 710.42,314.31 710.15,314.36 709.89,314.44 709.64,314.54 709.4,314.66 709.18,314.8 708.98,314.95 708.79,315.13 708.62,315.32 708.47,315.52 708.34,315.73 708.23,315.95 708.15,316.18 708.09,316.41 708.04,316.64 708.03,316.88 708.03,317.11 708.05,317.33 708.1,317.55 708.16,317.76 708.25,317.97 708.35,318.16 708.46,318.34 708.59,318.5 708.74,318.65 708.89,318.79 709.06,318.9 709.23,319.0 709.41,319.08 709.59,319.15 709.77,319.19 709.96,319.22 710.14,319.23 710.32,319.22 710.5,319.2" fill="none" stroke="#3a3a4a" stroke-width="1"/>
<line x1="710.5" y1="319.2" x2="710.5" y2="341.9" stroke="#3a3a4a" stroke-width="1" />
<polyline points="707.4,339.265 710.5,341.9 713.6,339.265" fill="none" stroke="#3a3a4a" stroke-width="1" />
<path d="M706.3,344.3 Q710.5,347.7 714.7,344.3" fill="none" stroke="#454545" stroke-width="1" />
<path d="M775.3,290.4 Q779.5,287.0 783.7,290.4" fill="none" stroke="#454545" stroke-width="1" />
<polyline points="776.4,295.235 779.5,292.6 782.6,295.235" fill="none" stroke="#454545" stroke-width="1" />
<line x1="779.5" y1="292.6" x2="779.5" y2="307.7" stroke="#3a3a4a" stroke-width="1" />
<polyline points="779.5,307.7 778.62,307.77 777.76,307.92 776.92,308.15 776.11,308.46 775.32,308.83 774.58,309.28 773.89,309.79 773.25,310.36 772.66,310.98 772.14,311.65 771.68,312.37 771.29,313.12 770.97,313.9 770.73,314.7 770.56,315.52 770.46,316.35 770.45,317.18 770.51,318.01 770.64,318.82 770.85,319.62 771.13,320.39 771.47,321.13 771.88,321.83 772.36,322.49 772.89,323.1 773.47,323.66 774.09,324.16 774.76,324.6 775.46,324.97 776.19,325.28 776.95,325.52 777.72,325.69 778.5,325.78 779.28,325.81 780.05,325.76 780.82,325.64 781.57,325.45 782.3,325.2 783.0,324.88 783.66,324.5 784.28,324.07 784.86,323.58 785.39,323.04 785.86,322.45 786.28,321.83 786.64,321.18 786.93,320.49 787.17,319.79 787.33,319.07 787.43,318.34 787.46,317.61 787.42,316.88 787.32,316.17 787.15,315.46 786.92,314.78 786.63,314.13 786.28,313.5 785.88,312.92 785.43,312.37 784.93,311.87 784.39,311.42 783.81,311.03 783.2,310.69 782.57,310.41 781.92,310.18 781.25,310.02 780.57,309.93 779.89,309.89 779.21,309.92 778.54,310.01 777.88,310.16 777.25,310.37 776.63,310.63 776.05,310.95 775.5,311.32 774.99,311.73 774.53,312.19 774.1,312.69 773.73,313.22 773.41,313.78 773.14,314.37 772.93,314.97 772.78,315.59 772.68,316.22 772.64,316.85 772.66,317.48 772.74,318.1 772.87,318.71 773.06,319.3 773.3,319.87 773.59,320.41 773.92,320.92 774.3,321.4 774.72,321.83 775.18,322.23 775.67,322.57 776.18,322.88 776.72,323.13 777.28,323.33 777.85,323.47 778.42,323.57 779.0,323.61 779.58,323.59 780.15,323.53 780.72,323.41 781.26,323.24 781.79,323.03 782.29,322.77 782.76,322.46 783.2,322.12 783.6,321.73 783.96,321.32 784.29,320.87 784.57,320.4 784.8,319.91 784.99,319.41 785.13,318.89 785.22,318.36 785.26,317.83 785.25,317.3 785.19,316.78 785.09,316.26 784.94,315.77 784.75,315.29 784.51,314.83 784.24,314.4 783.93,313.99 783.58,313.62 783.21,313.29 782.81,312.99 782.38,312.74 781.94,312.52 781.48,312.35 781.01,312.22 780.53,312.13 780.05,312.09 779.57,312.1 779.09,312.14 778.63,312.23 778.18,312.37 777.74,312.54 777.33,312.75 776.94,312.99 776.57,313.27 776.24,313.58 775.93,313.92 775.66,314.28 775.43,314.66 775.23,315.06 775.08,315.47 774.96,315.89 774.88,316.32 774.84,316.75 774.84,317.18 774.88,317.6 774.96,318.02 775.08,318.42 775.23,318.81 775.41,319.18 775.63,319.53 775.88,319.86 776.15,320.16 776.45,320.43 776.77,320.67 777.11,320.88 777.46,321.06 777.83,321.2 778.2,321.3 778.58,321.37 778.96,321.41 779.34,321.41 779.71,321.38 780.08,321.31 780.44,321.21 780.78,321.07 781.11,320.91 781.42,320.72 781.7,320.51 781.97,320.27 782.2,320.0 782.42,319.73 782.6,319.43 782.75,319.12 782.88,318.8 782.97,318.48 783.03,318.15 783.06,317.82 783.06,317.49 783.03,317.16 782.97,316.84 782.89,316.53 782.77,316.24 782.63,315.95 782.47,315.69 782.28,315.44 782.07,315.22 781.85,315.01 781.61,314.83 781.36,314.67 781.09,314.54 780.82,314.44 780.54,314.36 780.26,314.31 779.98,314.28 779.7,314.28 779.42,314.31 779.15,314.36 778.89,314.44 778.64,314.54 778.4,314.66 778.18,314.8 777.98,314.95 777.79,315.13 777.62,315.32 777.47,315.52 777.34,315.73 777.23,315.95 777.15,316.18 777.09,316.41 777.04,316.64 777.03,316.88 777.03,317.11 777.05,317.33 777.1,317.55 777.16,317.76 777.25,317.97 777.35,318.16 777.46,318.34 777.59,318.5 777.74,318.65 777.89,318.79 778.06,318.9 778.23,319.0 778.41,319.08 778.59,319.15 778.77,319.19 778.96,319.22 779.14,319.23 779.32,319.22 779.5,319.2" fill="none" stroke="#3a3a4a" stroke-width="1"/>
<line x1="779.5" y1="319.2" x2="779.5" y2="341.9" stroke="#3a3a4a" stroke-width="1" />
<polyline points="776.4,339.265 779.5,341.9 782.6,339.265" fill="none" stroke="#3a3a4a" stroke-width="1" />
<path d="M775.3,344.3 Q779.5,347.7 783.7,344.3" fill="none" stroke="#454545" stroke-width="1" />
<text x="636" y="361" font-size="7" fill="#404052" text-anchor="start" transform="rotate(-90 636 361)" >B14</text>
<text x="636" y="383" font-size="7" fill="#404052" text-anchor="start" transform="rotate(-90 636 383)" >YEL</text>
<text x="706.5" y="357" font-size="7" fill="#404052" text-anchor="start" transform="rotate(-90 706.5 357)" >B2</text>
<text x="706.5" y="383" font-size="7" fill="#404052" text-anchor="start" transform="rotate(-90 706.5 383)" >BLK</text>
<text x="776.6" y="360" font-size="7" fill="#404052" text-anchor="start" transform="rotate(-90 776.6 360)" >B15</text>
<text x="768.5" y="383" font-size="7" fill="#404052" text-anchor="start" transform="rotate(-90 768.5 383)" >LT</text>
<text x="776.6" y="383" font-size="7" fill="#404052" text-anchor="start" transform="rotate(-90 776.6 383)" >BLU</text>
<text x="768.5" y="413" font-size="7" fill="#404052" text-anchor="start" transform="rotate(-90 768.5 413)" >LT</text>
<text x="776.6" y="413" font-size="7" fill="#404052" text-anchor="start" transform="rotate(-90 776.6 413)" >GRN</text>
<line x1="640" y1="347" x2="640" y2="674.4" stroke="#f5f000" stroke-width="1.8" />
<polyline points="710.5,347.5 710.5,393.5 593.5,393.5" fill="none" stroke="#555" stroke-width="1.3" />
<line x1="557.4" y1="393.5" x2="593" y2="393.5" stroke="#555" stroke-width="1.3" stroke-dasharray="6,4"/>
<circle cx="593" cy="393.5" r="5.5" fill="#fff"/>
<circle cx="593" cy="393.5" r="2.3" fill="#111"/>
<circle cx="557.4" cy="393.5" r="4" fill="#fff"/>
<circle cx="557.4" cy="393.5" r="2.3" fill="#111"/>
<line x1="553.5" y1="390" x2="553.5" y2="397" stroke="#555" stroke-width="0.9" />
<line x1="551.5" y1="391.5" x2="551.5" y2="395.5" stroke="#555" stroke-width="0.9" />
<line x1="549.5" y1="392.5" x2="549.5" y2="394.5" stroke="#555" stroke-width="0.8" />
<text x="515.5" y="377" font-size="7" fill="#404052" text-anchor="start" >(CENTER</text>
<text x="515.5" y="384.6" font-size="7" fill="#404052" text-anchor="start" >OF DASH)</text>
<text x="548" y="395" font-size="7" fill="#404052" text-anchor="end" >G502</text>
<text x="563" y="389.8" font-size="7" fill="#404052" text-anchor="start" >BLK</text>
<text x="591.5" y="403.2" font-size="7" fill="#404052" text-anchor="middle" >S11</text>
<text x="562.6" y="411.4" font-size="7" fill="#404052" text-anchor="start" >(THERMAL JOINT)</text>
<line x1="780" y1="347" x2="780" y2="386" stroke="#00eefc" stroke-width="1.8" />
<path d="M775.8,387.8 Q780,391.2 784.2,387.8" fill="none" stroke="#454545" stroke-width="1" />
<path d="M775.8,391.5 Q780,394.9 784.2,391.5" fill="none" stroke="#454545" stroke-width="1" />
<line x1="780" y1="393" x2="780" y2="721.3" stroke="#18e818" stroke-width="1.8" />
<line x1="42.2" y1="405" x2="100.4" y2="405" stroke="#00eefc" stroke-width="1.8" />
<text x="45" y="401.8" font-size="7" fill="#404052" text-anchor="start" >LT BLU</text>
<text x="32.3" y="406.6" font-size="6.5" fill="#404052" text-anchor="middle" >1</text>
<text x="32.3" y="418.5" font-size="6.5" fill="#404052" text-anchor="middle" >2</text>
<text x="32.3" y="441.8" font-size="6.5" fill="#404052" text-anchor="middle" >3</text>
<text x="32.3" y="453.7" font-size="6.5" fill="#404052" text-anchor="middle" >4</text>
<text x="32.3" y="488.90000000000003" font-size="6.5" fill="#404052" text-anchor="middle" >5</text>
<text x="32.3" y="524.0" font-size="6.5" fill="#404052" text-anchor="middle" >6</text>
<text x="32.3" y="582.6999999999999" font-size="6.5" fill="#404052" text-anchor="middle" >7</text>
<text x="32.3" y="676.1999999999999" font-size="6.5" fill="#404052" text-anchor="middle" >8</text>
<text x="32.3" y="699.6999999999999" font-size="6.5" fill="#404052" text-anchor="middle" >9</text>
<text x="32.3" y="711.4" font-size="6.5" fill="#404052" text-anchor="middle" >10</text>
<text x="32.3" y="723.0999999999999" font-size="6.5" fill="#404052" text-anchor="middle" >11</text>
<line x1="42.2" y1="417" x2="850.7" y2="417" stroke="#fa00fa" stroke-width="1.8" />
<text x="45" y="412.8" font-size="7" fill="#404052" text-anchor="start" >PPL</text>
<line x1="42.2" y1="440" x2="850.7" y2="440" stroke="#f5f000" stroke-width="1.8" />
<text x="45" y="436" font-size="7" fill="#404052" text-anchor="start" >YEL</text>
<line x1="42.2" y1="452" x2="850.7" y2="452" stroke="#f5f000" stroke-width="1.8" />
<text x="45" y="447.9" font-size="7" fill="#404052" text-anchor="start" >YEL</text>
<line x1="42.2" y1="487" x2="850.7" y2="487" stroke="#bdbdbd" stroke-width="1.8" />
<text x="45" y="483.2" font-size="7" fill="#404052" text-anchor="start" >WHT/BLK</text>
<line x1="42.2" y1="522" x2="850.7" y2="522" stroke="#2ea61a" stroke-width="1.8" />
<text x="45" y="518.3" font-size="7" fill="#404052" text-anchor="start" >GRN</text>
<line x1="42.2" y1="581" x2="850.7" y2="581" stroke="#f02020" stroke-width="1.8" />
<text x="45" y="577" font-size="7" fill="#404052" text-anchor="start" >RED</text>
<line x1="42.2" y1="674" x2="639.5" y2="674" stroke="#f5f000" stroke-width="1.8" />
<text x="45" y="670.5" font-size="7" fill="#404052" text-anchor="start" >YEL</text>
<line x1="42.2" y1="698" x2="850.7" y2="698" stroke="#dedede" stroke-width="1.8" />
<text x="45" y="695" font-size="7" fill="#404052" text-anchor="start" >WHT</text>
<line x1="42.2" y1="709.5" x2="850.7" y2="709.5" stroke="#2a9a0a" stroke-width="1.2" />
<line x1="42.2" y1="710.5" x2="850.7" y2="710.5" stroke="#e8ec70" stroke-width="1.0" />
<text x="45" y="705.6" font-size="7" fill="#404052" text-anchor="start" >GRN/YEL</text>
<line x1="42.2" y1="721.4" x2="780.2" y2="721.4" stroke="#10f010" stroke-width="1.8" />
<text x="45" y="718" font-size="7" fill="#404052" text-anchor="start" >LT GRN</text>
<text x="859.8" y="418.9" font-size="6.5" fill="#404052" text-anchor="middle" >1</text>
<text x="845" y="412.9" font-size="7" fill="#404052" text-anchor="end" >PPL</text>
<text x="859.8" y="442.2" font-size="6.5" fill="#404052" text-anchor="middle" >2</text>
<text x="845" y="436.2" font-size="7" fill="#404052" text-anchor="end" >YEL</text>
<text x="859.8" y="454.09999999999997" font-size="6.5" fill="#404052" text-anchor="middle" >3</text>
<text x="845" y="448.09999999999997" font-size="7" fill="#404052" text-anchor="end" >YEL</text>
<text x="859.8" y="489.3" font-size="6.5" fill="#404052" text-anchor="middle" >4</text>
<text x="845" y="483.3" font-size="7" fill="#404052" text-anchor="end" >WHT/BLK</text>
<text x="859.8" y="524.4000000000001" font-size="6.5" fill="#404052" text-anchor="middle" >5</text>
<text x="845" y="518.4000000000001" font-size="7" fill="#404052" text-anchor="end" >GRN</text>
<text x="859.8" y="583.1" font-size="6.5" fill="#404052" text-anchor="middle" >6</text>
<text x="845" y="577.1" font-size="7" fill="#404052" text-anchor="end" >RED</text>
<text x="859.8" y="688.1" font-size="6.5" fill="#404052" text-anchor="middle" >7</text>
<text x="845" y="682.1" font-size="7" fill="#404052" text-anchor="end" >GRN/WHT</text>
<text x="859.8" y="700.4000000000001" font-size="6.5" fill="#404052" text-anchor="middle" >8</text>
<text x="845" y="694.4000000000001" font-size="7" fill="#404052" text-anchor="end" >WHT</text>
<text x="859.8" y="711.7" font-size="6.5" fill="#404052" text-anchor="middle" >9</text>
<text x="845" y="705.7" font-size="7" fill="#404052" text-anchor="end" >GRN/YEL</text>
<text x="859.8" y="723.4000000000001" font-size="6.5" fill="#404052" text-anchor="middle" >10</text>
<text x="845" y="717.4000000000001" font-size="7" fill="#404052" text-anchor="end" >BLK/YEL</text>
<text x="859.8" y="735.4000000000001" font-size="6.5" fill="#404052" text-anchor="middle" >11</text>
<text x="845" y="729.4000000000001" font-size="7" fill="#404052" text-anchor="end" >YEL/RED</text>
<text x="859.8" y="746.7" font-size="6.5" fill="#404052" text-anchor="middle" >12</text>
<text x="845" y="740.7" font-size="7" fill="#404052" text-anchor="end" >BLU/WHT</text>
<text x="859.8" y="758.9000000000001" font-size="6.5" fill="#404052" text-anchor="middle" >13</text>
<text x="845" y="752.9000000000001" font-size="7" fill="#404052" text-anchor="end" >WHT</text>
<text x="859.8" y="770.4000000000001" font-size="6.5" fill="#404052" text-anchor="middle" >14</text>
<text x="845" y="764.4000000000001" font-size="7" fill="#404052" text-anchor="end" >PNK</text>
<text x="859.8" y="782.0" font-size="6.5" fill="#404052" text-anchor="middle" >15</text>
<text x="845" y="776.0" font-size="7" fill="#404052" text-anchor="end" >BLU/BLK</text>
<text x="859.8" y="793.8000000000001" font-size="6.5" fill="#404052" text-anchor="middle" >16</text>
<text x="845" y="787.8000000000001" font-size="7" fill="#404052" text-anchor="end" >RED/BLK</text>
<polyline points="487,792 487,686 851,686" fill="none" stroke="#80c470" stroke-width="1.8" />
<polyline points="803.5,792.5 803.5,721.5 850.5,721.5" fill="none" stroke="#5a5a3a" stroke-width="1.3" />
<polyline points="639.5,792.5 639.5,732.5 850.5,732.5" fill="none" stroke="#ffd820" stroke-width="1.2" />
<polyline points="640.5,792.5 640.5,733.5 850.5,733.5" fill="none" stroke="#ffa040" stroke-width="1.2" />
<polyline points="452,792 452,744.5 850.7,744.5" fill="none" stroke="#2a2af0" stroke-width="1.7" />
<polyline points="159.5,792 159.5,768.2 850.7,768.2" fill="none" stroke="#ff80a0" stroke-width="1.8" />
<line x1="147" y1="791.5" x2="850.7" y2="791.5" stroke="#f01010" stroke-width="1.6" />
<rect x="34.7" y="735.3" width="25.9" height="53.40000000000009" fill="#dadafe" stroke="#77778c" stroke-width="1.6" stroke-dasharray="7.8,3.3"/>
<line x1="46.3" y1="744.5" x2="60" y2="744.5" stroke="#454545" stroke-width="1" />
<polyline points="57.5,741.5 60.5,744.5 57.5,747.5" fill="none" stroke="#454545" stroke-width="1" />
<path d="M63.5,740.9 Q67.5,744.9 63.5,748.9" fill="none" stroke="#454545" stroke-width="1" />
<line x1="46.3" y1="756.5" x2="60" y2="756.5" stroke="#454545" stroke-width="1" />
<polyline points="57.5,753.5 60.5,756.5 57.5,759.5" fill="none" stroke="#454545" stroke-width="1" />
<path d="M63.5,752.5 Q67.5,756.5 63.5,760.5" fill="none" stroke="#454545" stroke-width="1" />
<line x1="46.3" y1="768.5" x2="60" y2="768.5" stroke="#454545" stroke-width="1" />
<polyline points="57.5,765.5 60.5,768.5 57.5,771.5" fill="none" stroke="#454545" stroke-width="1" />
<path d="M63.5,764.2 Q67.5,768.2 63.5,772.2" fill="none" stroke="#454545" stroke-width="1" />
<line x1="46.3" y1="780.5" x2="60" y2="780.5" stroke="#454545" stroke-width="1" />
<polyline points="57.5,777.5 60.5,780.5 57.5,783.5" fill="none" stroke="#454545" stroke-width="1" />
<path d="M63.5,776 Q67.5,780 63.5,784" fill="none" stroke="#454545" stroke-width="1" />
<line x1="46.5" y1="744.9" x2="46.5" y2="756.5" stroke="#454545" stroke-width="1" />
<line x1="46.5" y1="768.2" x2="46.5" y2="780" stroke="#454545" stroke-width="1" />
<polyline points="66.5,744.5 135.5,744.5 135.5,792.5" fill="none" stroke="#d2d2d2" stroke-width="1.4" />
<line x1="66" y1="756.5" x2="850.7" y2="756.5" stroke="#dcdcdc" stroke-width="1.6" />
<polyline points="66,768 124,768 124,792" fill="none" stroke="#3232e0" stroke-width="1.8" />
<line x1="66" y1="780" x2="850.7" y2="780" stroke="#4040d8" stroke-width="1.8" />
<text x="79.7" y="740.5" font-size="7" fill="#404052" text-anchor="start" >WHT</text>
<text x="79.7" y="752.7" font-size="7" fill="#404052" text-anchor="start" >WHT</text>
<text x="79.7" y="764.3" font-size="7" fill="#404052" text-anchor="start" >BLU/BLK</text>
<text x="79.7" y="775.5" font-size="7" fill="#404052" text-anchor="start" >BLU/BLK</text>
<rect x="0" y="792" width="920" height="25" fill="#fff"/>
</svg></body></html>
